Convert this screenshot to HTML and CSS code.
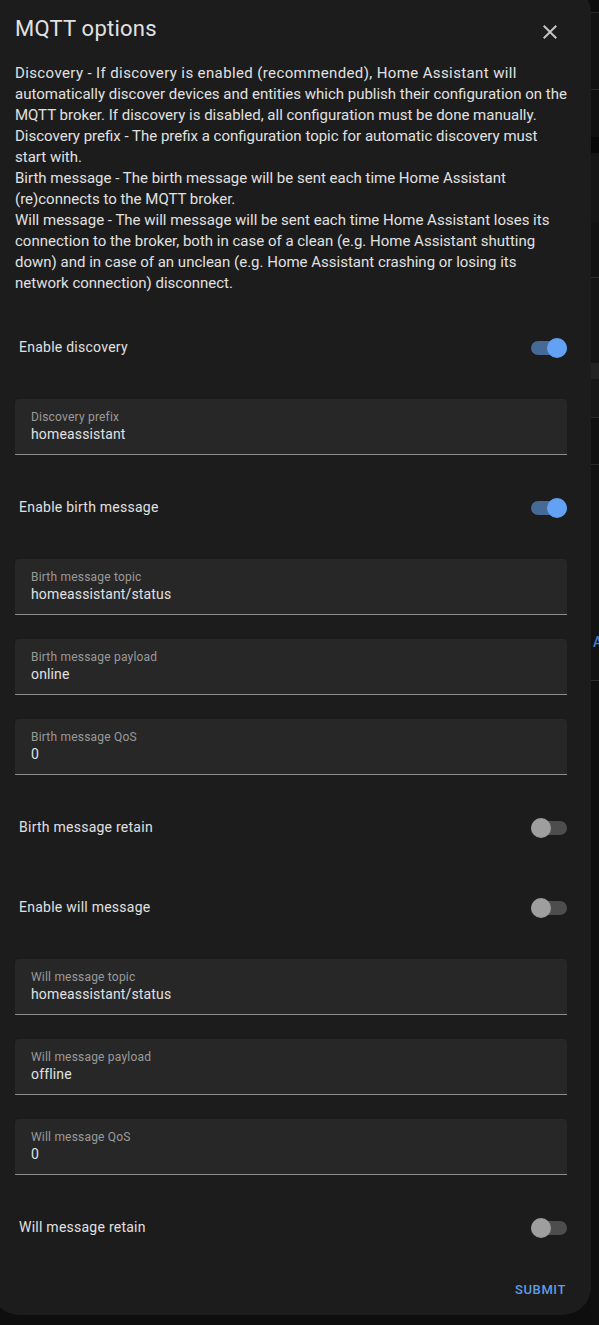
FILE: index.html
```html
<!DOCTYPE html>
<html lang="en">
<head>
<meta charset="utf-8">
<title>MQTT options</title>
<link rel="stylesheet" href="styles.css">
</head>
<body>
<div class="page">
  <div class="dialog">
    <header class="head">
      <h2 class="title">MQTT options</h2>
      <button class="close" aria-label="Close">
        <svg viewBox="0 0 24 24" width="24" height="24"><path d="M19,6.41L17.59,5L12,10.59L6.41,5L5,6.41L10.59,12L5,17.59L6.41,19L12,13.41L17.59,19L19,17.59L13.41,12L19,6.41Z"/></svg>
      </button>
    </header>
    <p class="desc"><span class="wide">Discovery - If discovery is enabled (recommended), Home Assistant will</span><br>automatically discover devices and entities which publish their configuration on the<br>MQTT broker. If discovery is disabled, all configuration must be done manually.<br>Discovery prefix - The prefix a configuration topic for automatic discovery must<br>start with.<br>Birth message - The birth message will be sent each time Home Assistant<br>(re)connects to the MQTT broker.<br>Will message - The will message will be sent each time Home Assistant loses its<br>connection to the broker, both in case of a clean (e.g. Home Assistant shutting<br>down) and in case of an unclean (e.g. Home Assistant crashing or losing its<br>network connection) disconnect.</p>
    <div class="form">
      <div class="row"><span class="row-label">Enable discovery</span><span class="switch on"><span class="thumb"></span></span></div>
      <div class="field"><span class="field-label">Discovery prefix</span><span class="field-value">homeassistant</span></div>
      <div class="row"><span class="row-label">Enable birth message</span><span class="switch on"><span class="thumb"></span></span></div>
      <div class="field"><span class="field-label">Birth message topic</span><span class="field-value">homeassistant/status</span></div>
      <div class="field"><span class="field-label">Birth message payload</span><span class="field-value">online</span></div>
      <div class="field"><span class="field-label">Birth message QoS</span><span class="field-value">0</span></div>
      <div class="row"><span class="row-label">Birth message retain</span><span class="switch"><span class="thumb"></span></span></div>
      <div class="row"><span class="row-label">Enable will message</span><span class="switch"><span class="thumb"></span></span></div>
      <div class="field"><span class="field-label">Will message topic</span><span class="field-value">homeassistant/status</span></div>
      <div class="field"><span class="field-label">Will message payload</span><span class="field-value">offline</span></div>
      <div class="field"><span class="field-label">Will message QoS</span><span class="field-value">0</span></div>
      <div class="row"><span class="row-label">Will message retain</span><span class="switch"><span class="thumb"></span></span></div>
    </div>
    <div class="actions"><button class="submit">Submit</button></div>
  </div>
  <div class="backdrop">
    <div class="bd b1"></div>
    <div class="bd b2"></div>
    <div class="bd b3"></div>
    <div class="bd b4"></div>
    <div class="bd b5"></div>
    <div class="bd b6"></div>
    <div class="bd b7"></div>
    <div class="bd b8"></div>
    <div class="bd b9"></div>
    <div class="bd b10"></div>
    <div class="bd b11"><span class="peek">A</span></div>
    <div class="bd b12"></div>
  </div>
</div>
</body>
</html>
```
FILE: styles.css
```css
* { box-sizing: border-box; }
html, body { margin: 0; padding: 0; }
body {
  background: #0e0e0e;
  font-family: Roboto, "Noto Sans", "Liberation Sans", sans-serif;
  color: #e1e1e1;
  overflow: hidden;
}
.page {
  display: flex;
  align-items: flex-start;
  width: 599px;
  height: 1325px;
  overflow: hidden;
}
.dialog {
  flex: 0 0 600px;
  width: 600px;
  margin: -15px 0 0 -9px;
  padding: 24px 24px 8px;
  background: #1c1c1c;
  border-radius: 28px;
  position: relative;
  z-index: 1;
}
.head {
  display: flex;
  justify-content: space-between;
  align-items: flex-start;
  height: 40px;
}
.title {
  margin: 0;
  font-size: 22px;
  font-weight: 400;
  letter-spacing: 0.25px;
  line-height: 40px;
  color: #e1e1e1;
}
.close {
  margin: 11px 5px 0 0;
  padding: 0;
  width: 24px;
  height: 24px;
  border: 0;
  background: none;
  display: flex;
}
.close svg { fill: #c4c4c4; }
.desc {
  margin: 14px 0 0;
  font-size: 15px;
  line-height: 21px;
  white-space: nowrap;
  color: #e1e1e1;
}
.desc .wide { letter-spacing: 0.38px; }
.form {
  margin-top: 25px;
  display: flex;
  flex-direction: column;
  gap: 24px;
}
.row {
  height: 56px;
  display: flex;
  align-items: center;
  justify-content: space-between;
  padding-left: 4px;
}
.row-label {
  font-size: 14px;
  letter-spacing: 0.25px;
  color: #e1e1e1;
}
.switch {
  position: relative;
  width: 36px;
  height: 14px;
  border-radius: 7px;
  background: #4d4d4d;
  margin-top: 1px;
}
.switch .thumb {
  position: absolute;
  top: -3px;
  left: 0;
  width: 20px;
  height: 20px;
  border-radius: 50%;
  background: #9e9e9e;
}
.switch.on { background: #466a95; }
.switch.on .thumb { left: 16px; background: #62a1f3; }
.field {
  height: 56px;
  background: #272727;
  border-radius: 4px 4px 0 0;
  border-bottom: 1px solid #8c8c8c;
  padding: 11px 16px 0;
  display: flex;
  flex-direction: column;
}
.field-label {
  font-size: 12px;
  letter-spacing: 0.2px;
  line-height: 14px;
  color: #9a9a9a;
}
.field-value {
  font-size: 14px;
  letter-spacing: 0.15px;
  line-height: 20px;
  color: #e1e1e1;
}
.actions {
  margin-top: 16px;
  display: flex;
  justify-content: flex-end;
}
.submit {
  height: 36px;
  padding: 0;
  border: 0;
  background: none;
  font-family: Roboto, "Noto Sans", "Liberation Sans", sans-serif;
  font-size: 13px;
  font-weight: 500;
  letter-spacing: 0.6px;
  text-transform: uppercase;
  color: #5f9be6;
  margin-right: 1px;
}
.backdrop {
  flex: 1;
  display: flex;
  flex-direction: column;
  height: 1325px;
  background: #0f0f0f;
}
.bd { flex: 0 0 auto; }
.b1 { height: 13px; background: #0c0c0c; border-bottom: 1px solid #2a2a2a; }
.b2 { height: 77px; background: #121212; border-bottom: 1px solid #2a2a2a; }
.b3 { height: 47px; background: #101010; }
.b4 { height: 16px; background: #080808; }
.b5 { height: 69px; background: #161616; }
.b6 { height: 56px; background: #121212; border-bottom: 1px solid #2c2c2c; }
.b7 { height: 85px; background: #141414; }
.b8 { height: 16px; background: #232323; }
.b9 { height: 39px; background: #171717; border-bottom: 1px solid #2a2a2a; }
.b10 { height: 47px; background: #101010; border-bottom: 1px solid #2a2a2a; }
.b11 {
  height: 216px;
  background: #121212;
  border-bottom: 1px solid #2c2c2c;
  padding-top: 170px;
  overflow: hidden;
}
.peek {
  display: block;
  margin-left: 2px;
  font-size: 14px;
  font-weight: 500;
  line-height: 14px;
  color: #3c7fd6;
}
.b12 { flex: 1; background: #0f0f0f; }
```
